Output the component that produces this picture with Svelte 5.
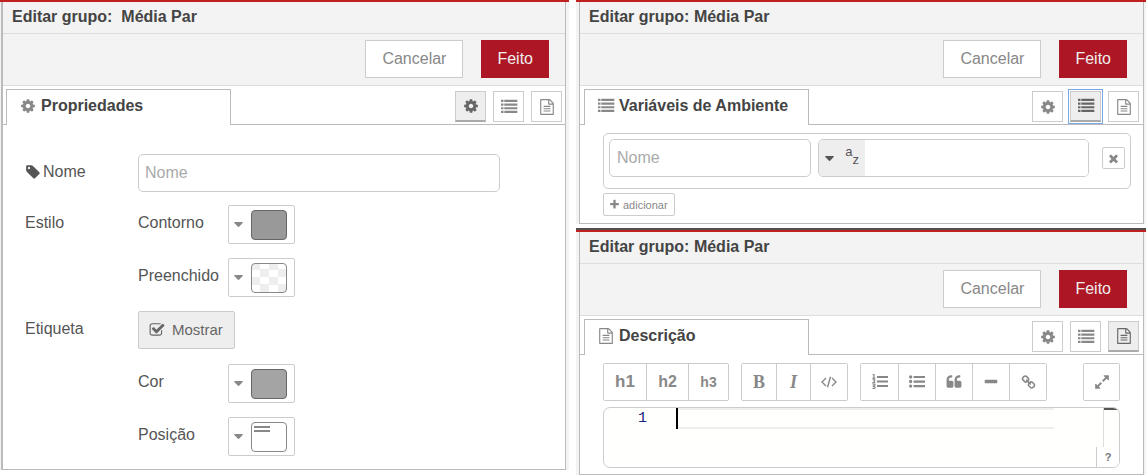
<script>
  const icons = {
    gear: 'M1152 896q0-106-75-181t-181-75-181 75-75 181 75 181 181 75 181-75 75-181zm512-109v222q0 12-8 23t-20 13l-185 28q-19 54-39 91 35 50 107 138 10 12 10 25t-9 23q-27 37-99 108t-94 71q-12 0-26-9l-138-108q-44 23-91 38-16 136-29 186-7 28-36 28h-222q-14 0-24.5-8.5t-11.5-21.5l-28-184q-49-16-90-37l-141 107q-10 9-25 9-14 0-25-11-126-114-165-168-7-10-7-23 0-12 8-23 15-21 51-66.5t54-70.5q-27-50-41-99l-183-27q-13-2-21-12.5t-8-23.5v-222q0-12 8-23t19-13l186-28q14-46 39-92-40-57-107-138-10-12-10-24 0-10 9-23 26-36 98.5-107.5t94.5-71.5q13 0 26 10l138 107q44-23 91-38 16-136 29-186 7-28 36-28h222q14 0 24.5 8.5t11.5 21.5l28 184q49 16 90 37l142-107q9-9 24-9 13 0 25 10 129 119 165 170 7 8 7 22 0 12-8 23-15 21-51 66.5t-54 70.5q26 50 41 98l183 28q13 2 21 12.5t8 23.5z',
    list: 'M0 90h280v250h-280zM370 90h1460v250h-1460zM0 500h280v250h-280zM370 500h1460v250h-1460zM0 910h280v250h-280zM370 910h1460v250h-1460zM0 1320h280v250h-280zM370 1320h1460v250h-1460z',
    file: 'M1596 380q28 28 48 76t20 88v1152q0 40-28 68t-68 28h-1344q-40 0-68-28t-28-68v-1600q0-40 28-68t68-28h896q40 0 88 20t76 48zm-444-244v376h376q-10-29-22-41l-313-313q-12-12-41-22zm384 1528v-1024h-416q-40 0-68-28t-28-68v-416h-768v1536h1280zm-1024-864q0-14 9-23t23-9h704q14 0 23 9t9 23v64q0 14-9 23t-23 9h-704q-14 0-23-9t-9-23v-64zm736 224q14 0 23 9t9 23v64q0 14-9 23t-23 9h-704q-14 0-23-9t-9-23v-64q0-14 9-23t23-9h704zm0 256q14 0 23 9t9 23v64q0 14-9 23t-23 9h-704q-14 0-23-9t-9-23v-64q0-14 9-23t23-9h704z',
    tag: 'M576 448q0-53-37.5-90.5t-90.5-37.5-90.5 37.5-37.5 90.5 37.5 90.5 90.5 37.5 90.5-37.5 37.5-90.5zm1067 576q0 53-37 90l-491 492q-39 37-91 37-53 0-90-37l-715-716q-38-37-64.5-101t-26.5-117v-416q0-52 38-90t90-38h416q53 0 117 26.5t102 64.5l715 714q37 39 37 91z',
    check: 'M1472 930v318q0 119-84.5 203.5t-203.5 84.5h-832q-119 0-203.5-84.5t-84.5-203.5v-832q0-119 84.5-203.5t203.5-84.5h832q63 0 117 25 15 7 18 23 3 17-9 29l-49 49q-10 10-23 10-3 0-9-2-23-6-45-6h-832q-66 0-113 47t-47 113v832q0 66 47 113t113 47h832q66 0 113-47t47-113v-254q0-13 9-22l64-64q10-10 23-10 6 0 12 3 20 8 20 29zm231-489l-814 814q-24 24-57 24t-57-24l-430-430q-24-24-24-57t24-57l110-110q24-24 57-24t57 24l263 263 647-647q24-24 57-24t57 24l110 110q24 24 24 57t-24 57z',
    plus: 'M1600 736v192q0 40-28 68t-68 28h-416v416q0 40-28 68t-68 28h-192q-40 0-68-28t-28-68v-416h-416q-40 0-68-28t-28-68v-192q0-40 28-68t68-28h416v-416q0-40 28-68t68-28h192q40 0 68 28t28 68v416h416q40 0 68 28t28 68z',
    times: 'M1490 1322q0 40-28 68l-136 136q-28 28-68 28t-68-28l-294-294-294 294q-28 28-68 28t-68-28l-136-136q-28-28-28-68t28-68l294-294-294-294q-28-28-28-68t28-68l136-136q28-28 68-28t68 28l294 294 294-294q28-28 68-28t68 28l136 136q28 28 28 68t-28 68l-294 294 294 294q28 28 28 68z',
    quote: 'M832 960v384q0 80-56 136t-136 56h-384q-80 0-136-56t-56-136v-704q0-104 40.5-198.5t109.5-163.5 163.5-109.5 198.5-40.5h64q26 0 45 19t19 45v128q0 26-19 45t-45 19h-64q-106 0-181 75t-75 181v32q0 40 28 68t68 28h224q80 0 136 56t56 136zm896 0v384q0 80-56 136t-136 56h-384q-80 0-136-56t-56-136v-704q0-104 40.5-198.5t109.5-163.5 163.5-109.5 198.5-40.5h64q26 0 45 19t19 45v128q0 26-19 45t-45 19h-64q-106 0-181 75t-75 181v32q0 40 28 68t68 28h224q80 0 136 56t56 136z',
    minus: 'M1600 736v192q0 40-28 68t-68 28h-1216q-40 0-68-28t-28-68v-192q0-40 28-68t68-28h1216q40 0 68 28t28 68z',
    link: 'M1520 1216q0-40-28-68l-208-208q-28-28-68-28-42 0-72 32 3 3 19 18.5t21.5 21.5 15 19 13 25.5 3.5 27.5q0 40-28 68t-68 28q-15 0-27.5-3.5t-25.5-13-19-15-21.5-21.5-18.5-19q-33 31-33 73 0 40 28 68l206 207q27 27 68 27 40 0 68-26l147-146q28-28 28-67zm-703-705q0-40-28-68l-206-207q-28-28-68-28-39 0-68 27l-147 146q-28 28-28 67 0 40 28 68l208 208q27 27 68 27 42 0 72-31-3-3-19-18.5t-21.5-21.5-15-19-13-25.5-3.5-27.5q0-40 28-68t68-28q15 0 27.5 3.5t25.5 13 19 15 21.5 21.5 18.5 19q33-31 33-73zm895 705q0 120-85 203l-147 146q-83 83-203 83-121 0-204-85l-206-207q-83-83-83-203 0-123 88-209l-88-88q-86 88-208 88-120 0-204-84l-208-208q-84-84-84-204t85-203l147-146q83-83 203-83 121 0 204 85l206 207q83 83 83 203 0 123-88 209l88 88q86-88 208-88 120 0 204 84l208 208q84 84 84 204z',
    expand: 'M883 1056q0 13-10 23l-332 332 144 144q19 19 19 45t-19 45-45 19h-448q-26 0-45-19t-19-45v-448q0-26 19-45t45-19 45 19l144 144 332-332q10-10 23-10t23 10l114 114q10 10 10 23zm781-864v448q0 26-19 45t-45 19-45-19l-144-144-332 332q-10 10-23 10t-23-10l-114-114q-10-10-10-23t10-23l332-332-144-144q-19-19-19-45t19-45 45-19h448q26 0 45 19t19 45z',
    bullets: 'M370 330a185 185 0 1 1-370 0 185 185 0 1 1 370 0zM370 840a185 185 0 1 1-370 0 185 185 0 1 1 370 0zM370 1350a185 185 0 1 1-370 0 185 185 0 1 1 370 0zM512 210h1280v250h-1280zM512 720h1280v250h-1280zM512 1230h1280v250h-1280z'
  };

  const tabs = [
    { id: 'props', icon: 'gear', name: 'Propriedades' },
    { id: 'env', icon: 'list', name: 'Variáveis de Ambiente' },
    { id: 'desc', icon: 'file', name: 'Descrição' }
  ];
</script>

{#snippet icon(name, size = 16)}
  <svg class="icon" width={size} height={size} viewBox="0 0 1792 1792" aria-hidden="true"><path d={icons[name]} /></svg>
{/snippet}

{#snippet caret()}
  <svg class="icon" width="9" height="5" viewBox="0 0 9 5" aria-hidden="true"><path d="M0.6 0h7.8q.8.3.3 1L5 4.7q-.5.4-1 0L.3 1Q-.2.3.6 0z" /></svg>
{/snippet}

{#snippet head(title, active, focused)}
  <h2 class="title">{title}</h2>
  <div class="actions">
    <button class="btn">Cancelar</button>
    <button class="btn primary">Feito</button>
  </div>
  <div class="tabs">
    {#each tabs.filter((t) => t.id === active) as tab}
      <h3 class="tab">{@render icon(tab.icon)}<span>{tab.name}</span></h3>
    {/each}
    <div class="switch">
      {#each tabs as tab}
        <button class="square" class:on={tab.id === active} class:focus={focused && tab.id === active} aria-label={tab.name}>
          {@render icon(tab.icon)}
        </button>
      {/each}
    </div>
  </div>
{/snippet}

<main class="page">
  <section class="column left">
    <div class="panel">
      {@render head('Editar grupo:\u00a0 Média Par', 'props', false)}
      <form class="props">
        <label class="key" for="name">{@render icon('tag')}<span>Nome</span></label>
        <input id="name" class="field" type="text" placeholder="Nome" />
        <span class="key">Estilo</span>
        <span>Contorno</span>
        <button type="button" class="picker" aria-label="Contorno">{@render caret()}<i class="swatch gray"></i></button>
        <span class="second">Preenchido</span>
        <button type="button" class="picker" aria-label="Preenchido">{@render caret()}<i class="swatch clear"></i></button>
        <span class="key">Etiqueta</span>
        <button type="button" class="show" aria-pressed="true">{@render icon('check')}<span>Mostrar</span></button>
        <span class="second">Cor</span>
        <button type="button" class="picker" aria-label="Cor">{@render caret()}<i class="swatch light"></i></button>
        <span class="second">Posição</span>
        <button type="button" class="picker" aria-label="Posição">{@render caret()}<i class="swatch place"></i></button>
      </form>
    </div>
  </section>

  <div class="stack">
    <section class="column right">
      <div class="panel">
        {@render head('Editar grupo: Média Par', 'env', true)}
        <div class="env">
          <div class="entry">
            <input class="field key-field" type="text" placeholder="Nome" aria-label="Nome" />
            <div class="typed">
              <button class="type" aria-label="az">{@render caret()}<span class="az"><span>a</span><span class="z">z</span></span></button>
              <input type="text" aria-label="az" />
            </div>
            <button class="remove" aria-label="×">{@render icon('times', 13)}</button>
          </div>
          <button class="add">{@render icon('plus', 11)}<span>adicionar</span></button>
        </div>
      </div>
    </section>

    <section class="column right lower">
      <div class="panel">
        {@render head('Editar grupo: Média Par', 'desc', false)}
        <div class="desc">
          <div class="tools">
            <div class="group">
              <button class="h1">h1</button>
              <button class="h2">h2</button>
              <button class="h3">h3</button>
            </div>
            <div class="group">
              <button class="bold">B</button>
              <button class="italic">I</button>
              <button class="code" aria-label="</>">
                <svg width="16" height="12" viewBox="0 0 16 12" fill="none" stroke="currentColor" stroke-width="1.4" aria-hidden="true"><path d="M5 2L1 6l4 4M11 2l4 4-4 4M9.5 .8l-3 10.4" /></svg>
              </button>
            </div>
            <div class="group lists">
              <button aria-label="1.">
                <svg width="16" height="16" viewBox="0 0 16 16" aria-hidden="true">
                  <path fill="currentColor" d="M5 1.9h11v2.200H5zM5 6.400h11v2.200H5zM5 10.900h11v2.200H5z" />
                  <path fill="none" stroke="currentColor" stroke-width="1.2" d="M.6 .8L1.900 .3V4M.4 4.100h3M.6 5.900q2.200-.9 2.200.5Q2.800 7.500.7 8.900h2.700M.6 10.800h2.300L1.700 12.400q1.500 0 1.400 1.100-.3 1.300-2.600.7" />
                </svg>
              </button>
              <button aria-label="•">{@render icon('bullets')}</button>
              <button aria-label="“">{@render icon('quote')}</button>
              <button aria-label="—">{@render icon('minus')}</button>
              <button aria-label="Link">{@render icon('link', 15)}</button>
            </div>
            <div class="group expand">
              <button aria-label="+">{@render icon('expand')}</button>
            </div>
          </div>
          <div class="editor">
            <span class="line">1</span>
            <textarea rows="1" aria-label="Descrição"></textarea>
            <span class="ruler"></span>
            <button class="help">?</button>
          </div>
        </div>
      </div>
    </section>
  </div>
</main>

<style>
  :global(body) {
    margin: 0;
    background: #fff;
  }
  .page {
    display: grid;
    grid-template-columns: minmax(0, 569fr) minmax(0, 570fr);
    gap: 7px;
    align-items: start;
    font: 16px/20px "Liberation Sans", Arial, sans-serif;
    color: #555;
  }
  .page * {
    box-sizing: border-box;
  }
  button, input, textarea {
    font: inherit;
    color: inherit;
    margin: 0;
  }
  button {
    display: flex;
    align-items: center;
    justify-content: center;
    padding: 0;
    border: 1px solid #ccc;
    background: #fff;
    color: #888;
  }
  .icon {
    display: block;
    flex: none;
    fill: currentColor;
    overflow: visible;
  }
  .column {
    border-top: 2px solid #c02020;
    background: #f3f3f3;
  }
  .left {
    padding: 0 3px 0 1px;
  }
  .right {
    padding: 0 2px 0 3px;
  }
  .lower {
    margin-top: 4px;
    box-shadow: 0 -2px #505050;
  }
  .stack {
    display: flex;
    flex-direction: column;
    gap: 2px;
  }
  .panel {
    border: 1px solid #bbb;
    border-top: 0;
    background: #fff;
  }
  .left .panel {
    border-left-width: 2px;
  }
  .title {
    margin: 0;
    padding: 5px 9px 6px;
    border-bottom: 1px solid #ddd;
    background: #f3f3f3;
    color: #444;
    font-size: 16px;
    line-height: 20px;
  }
  .actions {
    display: flex;
    justify-content: flex-end;
    gap: 18px;
    padding: 6px 16px 7px;
    border-bottom: 1px solid #ddd;
    background: #f3f3f3;
  }
  .btn {
    height: 38px;
    padding: 0 16px;
  }
  .primary {
    padding: 0 15px;
    border-color: #ad1625;
    background: #ad1625;
    color: #eee;
  }
  .tabs {
    display: flex;
    justify-content: space-between;
    padding: 3px 4px 0;
    border-bottom: 1px solid #bbb;
  }
  .left .tabs {
    padding: 3px 3px 0;
  }
  .tab {
    display: flex;
    align-items: center;
    gap: 5px;
    width: 225px;
    height: 36px;
    margin: 0 0 -1px;
    padding: 0 12px 3px 13px;
    border: 1px solid #bbb;
    border-bottom: 0;
    background: #fff;
    color: #444;
    font-size: 16px;
    white-space: nowrap;
  }
  .tab .icon {
    color: #888;
  }
  .switch {
    display: flex;
    gap: 7px;
    padding-top: 2px;
  }
  .square {
    width: 31px;
    height: 31px;
  }
  .square.on {
    border-bottom: 2px solid #aaa;
    background: #eee;
    color: #666;
  }
  .square.focus {
    outline: 1px solid #7aa7e8;
    outline-offset: 1px;
  }
  .field {
    min-width: 0;
    height: 38px;
    padding: 0 6px;
    border: 1px solid #ccc;
    border-radius: 5px;
    background: #fff;
  }
  input::placeholder {
    color: #aaa;
    opacity: 1;
  }
  .props {
    display: grid;
    grid-template-columns: 113px 90px 1fr;
    grid-template-rows: 37px;
    grid-auto-rows: 39px;
    row-gap: 14px;
    padding: 29px 65px 13px 22px;
  }
  .props > span, .props > label {
    height: 35px;
    line-height: 35px;
  }
  .props > .key {
    grid-column: 1;
  }
  .props > label {
    display: flex;
    align-items: center;
    gap: 2px;
  }
  .props .field {
    grid-column: 2 / 4;
  }
  .second {
    grid-column: 2;
  }
  .picker {
    justify-content: flex-start;
    gap: 8px;
    width: 67px;
    height: 39px;
    padding-left: 5px;
    border-radius: 2px;
  }
  .swatch {
    width: 36px;
    height: 30px;
    border: 1px solid #888;
    border-radius: 4px;
  }
  .gray {
    border-color: #666;
    background: #999;
  }
  .light {
    border-color: #666;
    background: #a4a4a4;
  }
  .clear {
    background: repeating-conic-gradient(#fff 0 25%, #eee 0 50%) -1px -2px / 18px 15px;
  }
  .place {
    background: linear-gradient(#888 0 2px, #fff 2px 4px, #888 4px 6px) 2px 3px / 16px 6px no-repeat;
  }
  .show {
    grid-column: 2 / 4;
    justify-self: start;
    gap: 7px;
    height: 38px;
    padding: 0 11px 0 10px;
    border-radius: 2px;
    background: #eee;
    color: #666;
    font-size: 15px;
  }
  .env {
    padding: 8px 12px 7px 23px;
  }
  .entry {
    display: flex;
    gap: 7px;
    padding: 5px 5px 11px;
    border: 1px solid #ccc;
    border-radius: 5px;
  }
  .key-field {
    flex: 9 1 0;
    padding: 0 7px;
  }
  .typed {
    display: flex;
    flex: 13 1 0;
    min-width: 0;
    height: 38px;
    overflow: hidden;
    border: 1px solid #ccc;
    border-radius: 5px;
  }
  .typed input {
    flex: 1;
    min-width: 0;
    border: 0;
    background: #fff;
  }
  .type {
    gap: 11px;
    width: 46px;
    border: 0;
    background: #eee;
    color: #555;
  }
  .az {
    display: flex;
    height: 26px;
    padding-bottom: 4px;
    font-size: 13px;
    line-height: 14px;
  }
  .z {
    align-self: flex-end;
  }
  .remove {
    align-self: center;
    width: 23px;
    height: 22px;
    margin-left: 6px;
    border-radius: 2px;
  }
  .add {
    gap: 3px;
    height: 23px;
    margin-top: 4px;
    padding: 0 6px 0 5px;
    border-radius: 2px;
    font-size: 11px;
  }
  .desc {
    padding: 8px 23px 6px;
  }
  .tools {
    display: flex;
    margin-bottom: 6px;
    gap: 12px;
  }
  .group {
    display: flex;
    border: 1px solid #ccc;
    border-radius: 2px;
  }
  .group button {
    width: 37px;
    height: 36px;
    border: 0;
  }
  .group button + button {
    border-left: 1px solid #ccc;
  }
  .group .h1, .group .h2 {
    width: 42px;
    font-size: 17px;
    font-weight: bold;
  }
  .group .h2 {
    font-size: 16px;
  }
  .group .h3 {
    width: 40px;
    font-size: 14px;
    font-weight: bold;
  }
  .group .bold, .group .italic {
    width: 34px;
    font-family: "Liberation Serif", "Times New Roman", serif;
    font-size: 18px;
    font-weight: bold;
  }
  .group .italic {
    font-style: italic;
  }
  .expand {
    margin-left: auto;
  }
  .group.expand button {
    width: 35px;
  }
  .editor {
    position: relative;
    display: flex;
    height: 61px;
    overflow: hidden;
    border: 1px solid #ccc;
    border-radius: 7px;
    background: #fffffe;
  }
  .line {
    width: 72px;
    padding-right: 29px;
    color: #1a237e;
    font: 15px/21px "Liberation Mono", "Courier New", monospace;
    text-align: right;
  }
  textarea {
    flex: 1;
    min-width: 0;
    height: 21px;
    padding: 0;
    margin-right: 49px;
    border: 0;
    border-left: 2px solid #000;
    background: transparent;
    box-shadow: inset 0 2px #eee, inset 0 -2px #eee;
    outline: 0;
    resize: none;
  }
  .ruler {
    width: 16px;
    border-left: 1px solid #ddd;
    background: linear-gradient(#555 0 2px, transparent 2px);
  }
  .help {
    position: absolute;
    right: 0;
    bottom: 0;
    width: 23px;
    height: 20px;
    border: 0;
    border-left: 1px solid #ccc;
    color: #777;
    font-size: 11px;
    font-weight: bold;
  }
</style>
